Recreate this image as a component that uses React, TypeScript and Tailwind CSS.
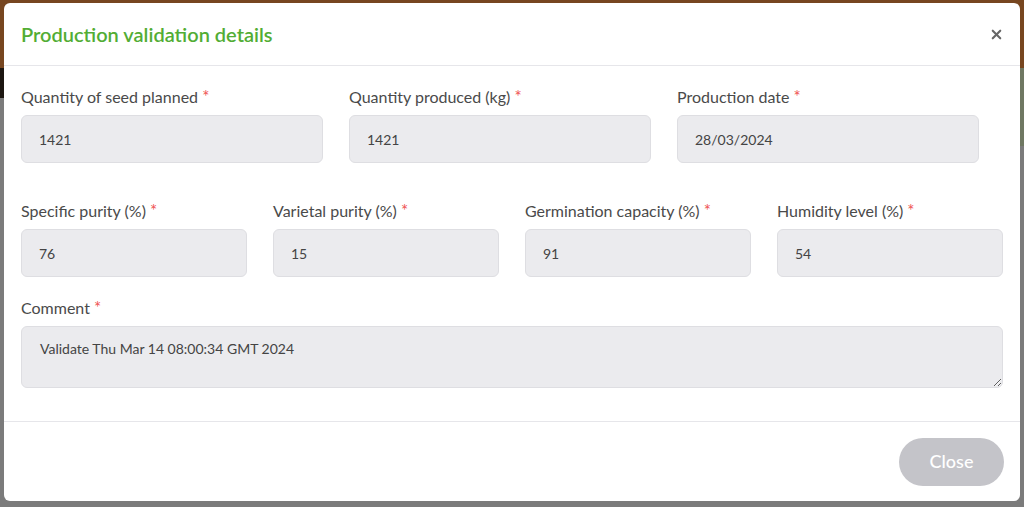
import { X } from "lucide-react";

type Field = { label: string; value: string };

const topRow: Field[] = [
  { label: "Quantity of seed planned", value: "1421" },
  { label: "Quantity produced (kg)", value: "1421" },
  { label: "Production date", value: "28/03/2024" },
];

const secondRow: Field[] = [
  { label: "Specific purity (%)", value: "76" },
  { label: "Varietal purity (%)", value: "15" },
  { label: "Germination capacity (%)", value: "91" },
  { label: "Humidity level (%)", value: "54" },
];

function Label({ text }: { text: string }) {
  return (
    <label className="block text-[16px] leading-[22px] text-[#4a4a4a]">
      {text} <span className="text-[17px] text-[#ef5454]">*</span>
    </label>
  );
}

function ReadOnlyInput({ value }: { value: string }) {
  return (
    <input
      readOnly
      value={value}
      className="mt-[7px] block h-[48px] w-full rounded-[6px] border border-[#dedee2] bg-[#ebebee] px-[17px] text-[14px] text-[#444] outline-none"
    />
  );
}

export default function App() {
  return (
    <div
      className="relative h-[507px] w-full overflow-hidden bg-[#7b7b7b]"
      style={{ fontFamily: "Lato, 'Open Sans', sans-serif" }}
    >
      {/* page behind the overlay */}
      <div className="h-[68px] bg-[#774620]" />
      <div className="flex h-[78px] items-start">
        <div className="h-[30px] w-[20px] bg-[#1c1611]" />
        <div className="h-[30px] flex-1 bg-[#7d7d7d]" />
        <div className="h-[78px] w-[20px] bg-[#6f7862]" />
      </div>

      {/* modal */}
      <div className="absolute inset-0">
        <div className="mx-auto mt-[3px] flex h-[498px] w-[1016px] flex-col rounded-[6px] bg-white">
          <div className="flex h-[63px] items-center justify-between border-b border-[#e6e6ea] px-[17px]">
            <h2 className="text-[20px] font-semibold text-[#52ad34]">
              Production validation details
            </h2>
            <button className="mr-[-1px] text-[#666]">
              <X size={15} strokeWidth={3.4} />
            </button>
          </div>

          <div className="flex-1 px-[17px] pt-[20px]">
            <div className="flex gap-[26px]">
              {topRow.map((f) => (
                <div key={f.label} className="w-[302px]">
                  <Label text={f.label} />
                  <ReadOnlyInput value={f.value} />
                </div>
              ))}
            </div>

            <div className="mt-[37px] grid grid-cols-4 gap-[26px]">
              {secondRow.map((f) => (
                <div key={f.label}>
                  <Label text={f.label} />
                  <ReadOnlyInput value={f.value} />
                </div>
              ))}
            </div>

            <div className="mt-[20px]">
              <Label text="Comment" />
              <textarea
                readOnly
                value="Validate Thu Mar 14 08:00:34 GMT 2024"
                className="mt-[7px] block h-[62px] w-full rounded-[6px] border border-[#dedee2] bg-[#ebebee] px-[18px] py-[11px] text-[14px] text-[#444] outline-none"
              />
            </div>
          </div>

          <div className="flex h-[80px] items-center justify-end border-t border-[#e6e6ea] px-[16px]">
            <button className="h-[48px] w-[105px] rounded-full bg-[#c4c4c9] text-[18px] font-medium text-white">
              Close
            </button>
          </div>
        </div>
      </div>
    </div>
  );
}
